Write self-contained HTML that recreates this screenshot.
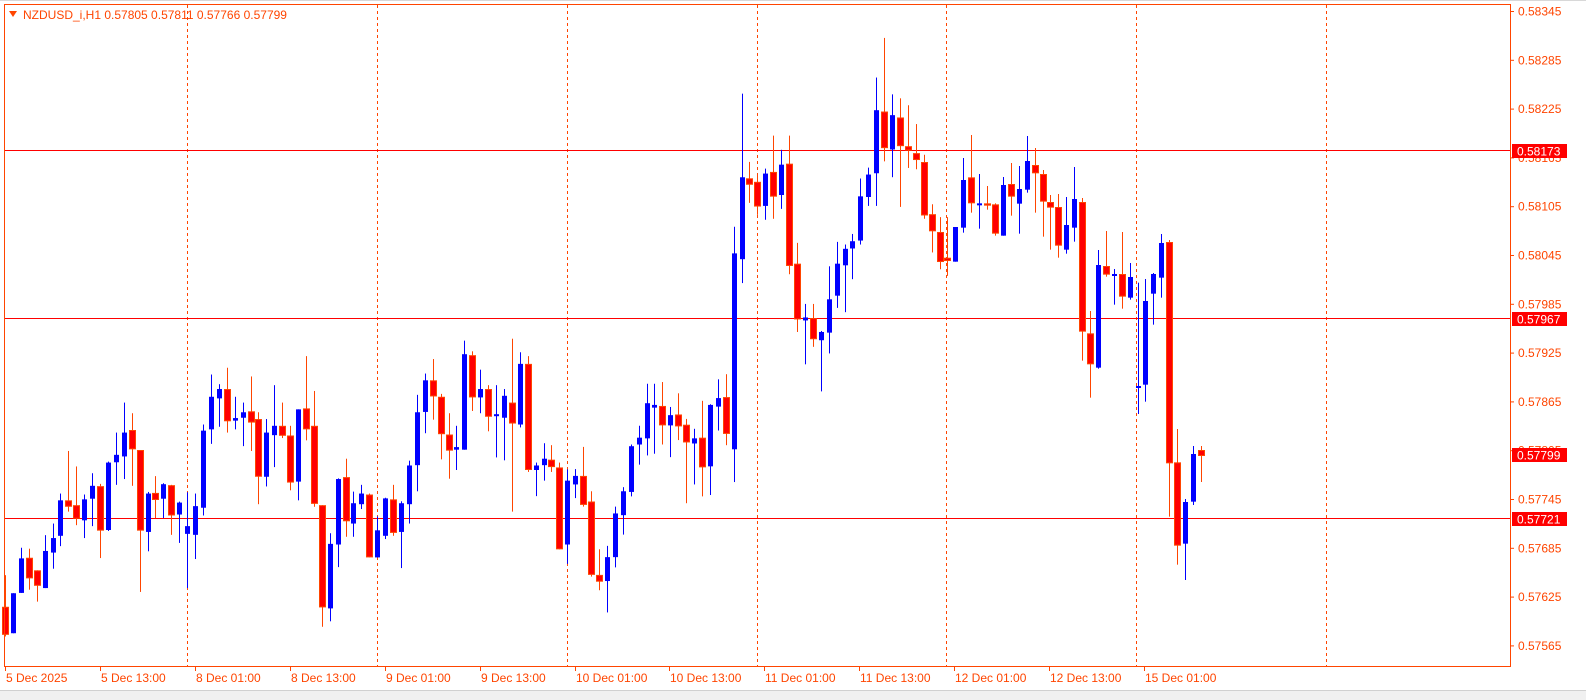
<!DOCTYPE html>
<html><head><meta charset="utf-8">
<style>
html,body{margin:0;padding:0;background:#fff;width:1586px;height:700px;overflow:hidden}
svg{display:block}
text{font-family:"Liberation Sans",sans-serif;font-size:12px;fill:#ff4500}
</style></head><body>
<svg id="c" width="1586" height="700" xmlns="http://www.w3.org/2000/svg">
<rect x="0" y="0" width="1586" height="700" fill="#fff"/>
<rect x="0" y="690" width="1586" height="10" fill="#f0f0f0"/>
<line x1="0" y1="690.5" x2="1586" y2="690.5" stroke="#d0d0d0"/>
<line x1="0" y1="0.5" x2="1586" y2="0.5" stroke="#d8d8d8"/>
<g id="grid"></g>
<g id="candles"></g>
<rect x="4.5" y="4.5" width="1506" height="662" fill="none" stroke="#ff4500"/>
<polygon points="9,11 17,11 13,17" fill="#ff4500"/>
<text x="23" y="19" font-size="12">NZDUSD_i,H1  0.57805 0.57811 0.57766 0.57799</text>
<g id="axis"></g>
</svg>
<script>
var NS="http://www.w3.org/2000/svg";
function el(p,t,a,txt){var e=document.createElementNS(NS,t);for(var k in a)e.setAttribute(k,a[k]);if(txt!==undefined)e.textContent=txt;p.appendChild(e);return e;}
var A=[["r",760,950,858,945],["b",816,940,816,940],["b",675,815,708,815],["r",678,805,706,770],["r",745,842,745,793],["b",636,800,685,800],["b",600,740,645,690],["b",507,670,528,638],["r",375,563,528,548],["r",423,605,543,585],["b",510,645,525,590],["b",444,608,483,523],["r",477,707,484,622],["b",408,623,411,620],["b",318,480,387,410],["b",225,462,318,392],["r",258,483,310,370],["r",372,812,372,622],["b",502,686,507,626],["r",453,583,505,527],["b",475,583,478,523],["r",480,635,481,575],["b",532,660,535,572],["b",503,800,608,632],["b",507,710,546,635],["b",293,575,312,551],["b",138,353,207,308],["b",168,300,183,212],["r",117,318,183,283],["b",207,308,273,281],["b",225,360,255,272],["r",144,375,252,287],["r",255,540,276,455],["b",276,485,318,455],["b",171,425,297,326],["r",225,335,297,328],["r",297,497,327,473],["b",246,528,246,470],["r",81,342,243,308],["r",189,548,297,539],["r",543,920,543,860],["b",630,903,663,863],["b",460,735,462,665],["r",399,641,456,593],["b",501,641,537,600],["b",480,555,507,540],["r",507,705,510,705],["b",578,705,621,705],["b",520,648,522,638],["r",480,638,525,629],["b",531,738,537,626],["b",405,600,420,540],["b",201,500,255,419],["b",135,320,156,254],["r",90,278,156,206],["r",198,401,207,323],["r",258,461,324,374],["b",297,434,363,371],["b",33,371,75,371],["r",66,251,78,209],["b",123,258,183,209],["r",171,314,183,269],["b",171,395,261,266],["b",183,404,204,272],["r",27,563,225,290],["b",69,302,105,293],["r",81,440,105,434],["b",411,515,420,434],["b",351,467,399,419],["r",357,440,402,425],["r",411,680,426,680],["b",432,725,467,665]];
var B=[["b",1140,1225,1160,1185],["r",1075,1250,1160,1245],["r",1205,1455,1235,1450],["r",1375,1495,1450,1470],["b",1365,1560,1398,1468],["b",1250,1428,1270,1398],["b",1193,1332,1205,1275],["b",1068,1220,1073,1207],["b",1013,1127,1048,1068],["b",890,1100,947,1050],["b",890,1095,952,960],["r",885,1068,955,1012],["b",958,1105,982,1012],["r",918,1055,980,1015],["r",993,1240,1010,1062],["b",1022,1185,1050,1065],["r",940,1220,1048,1135],["b",950,1216,952,1132],["b",877,1027,932,957],["r",862,1070,929,1037],["b",430,1178,508,1082],["b",40,595,285,525],["r",240,360,288,307]];
var C=[["r",440,560,460,535],["b",420,575,435,533],["r",320,572,430,505],["b",363,542,408,500],["r",320,740,405,715],["r",645,915,708,877],["b",830,1013,871,880],["r",830,960,873,937],["b",912,1095,915,940],["b",716,980,816,917],["b",642,842,708,805],["b",650,855,663,713],["b",618,755,640,662],["b",450,650,504,638],["b",417,533,438,506],["b",144,533,243,434],["r",24,398,247,358],["b",195,446,258,362],["r",207,536,265,352],["r",228,418,352,365],["r",285,422,373,394],["r",378,572,400,562],["r",528,674,558,610],["r",567,725,612,703],["r",567,745,690,700]];
var D=[["b",321,425,321,425],["b",114,338,180,323],["r",45,278,172,250],["b",162,326,250,254],["r",198,269,250,257],["r",250,347,253,341],["b",171,347,195,347],["r",129,287,192,230],["b",138,341,207,251],["b",48,218,123,209],["r",84,278,135,160],["r",150,350,162,245],["r",225,389,246,263],["r",222,413,261,377],["b",231,401,315,389],["b",141,365,237,323],["r",234,722,246,635],["r",573,833,640,733],["b",390,746,435,743],["r",333,470,438,464],["b",447,554,462,465],["r",336,566,462,530],["b",429,539,471,533],["b",488,882,798,803],["b",477,845,543,794],["b",459,614,462,521],["b",342,533,369,473],["r",360,1190,366,1030],["r",927,1334,1027,1277],["b",1137,1380,1146,1271],["b",978,1155,1002,1145]];
var all=[];
function add(arr,off,s){arr.forEach(function(c){all.push([c[0],off+c[1]/s,off+c[2]/s,off+c[3]/s,off+c[4]/s]);});}
add(A,330,3.1);add(B,80,2.93);add(C,30,3.03);add(D,120,3);
all.push(["r",446,482,450,456]);
var g=document.getElementById("candles"),gr=document.getElementById("grid"),ax=document.getElementById("axis");
// grid
[187,377,567,757,946,1136,1326].forEach(function(x){el(gr,"line",{x1:x+.5,y1:5,x2:x+.5,y2:666,stroke:"#ff4500","stroke-dasharray":"3,3"});});
[150,318,518].forEach(function(y){el(gr,"line",{x1:4,y1:y+.5,x2:1510,y2:y+.5,stroke:"#ff0000"});});
all.forEach(function(c,i){
 var x=Math.round(5+7.92*i);
 var col=c[0]=="r"?"#ff4500":"#0000ff";
 el(g,"rect",{x:x,y:c[1],width:1,height:Math.max(1,c[2]-c[1]),fill:col});
 var bt=c[3],bb=Math.max(c[4],c[3]+2);
 if(c[0]=="r") el(g,"rect",{x:x-2.5,y:bt+0.5,width:6,height:bb-bt-1,fill:"#ff0000",stroke:"#ff4500","stroke-width":1});
 else el(g,"rect",{x:x-2,y:bt,width:5,height:bb-bt,fill:"#0000ff"});
});
// price axis
var prices=["0.58345","0.58285","0.58225","0.58165","0.58105","0.58045","0.57985","0.57925","0.57865","0.57805","0.57745","0.57685","0.57625","0.57565"];
prices.forEach(function(p,i){var y=11+i*48.8;el(ax,"line",{x1:1510,y1:y+.5,x2:1514,y2:y+.5,stroke:"#ff4500"});el(ax,"text",{x:1518,y:y+4.5},p);});
[[151,"0.58173"],[319,"0.57967"],[455,"0.57799"],[519,"0.57721"]].forEach(function(t){el(ax,"rect",{x:1512,y:t[0]-7,width:55,height:14,fill:"#ff0000"});el(ax,"text",{x:1517,y:t[0]+4.5,style:"fill:#fff"},t[1]);});
// time axis
var tl=[[6,"5 Dec 2025"],[101,"5 Dec 13:00"],[196,"8 Dec 01:00"],[291,"8 Dec 13:00"],[386,"9 Dec 01:00"],[481,"9 Dec 13:00"],[576,"10 Dec 01:00"],[670,"10 Dec 13:00"],[765,"11 Dec 01:00"],[860,"11 Dec 13:00"],[955,"12 Dec 01:00"],[1050,"12 Dec 13:00"],[1145,"15 Dec 01:00"]];
tl.forEach(function(t){el(ax,"line",{x1:t[0]-0.5,y1:666,x2:t[0]-0.5,y2:671,stroke:"#ff4500"});el(ax,"text",{x:t[0],y:682},t[1]);});
</script>
</body></html>
